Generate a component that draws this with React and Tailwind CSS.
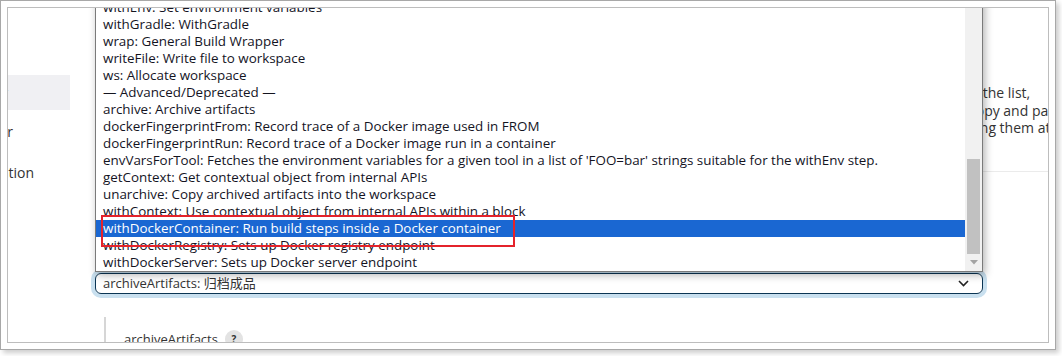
const steps = [
  'withEnv: Set environment variables',
  'withGradle: WithGradle',
  'wrap: General Build Wrapper',
  'writeFile: Write file to workspace',
  'ws: Allocate workspace',
  '— Advanced/Deprecated —',
  'archive: Archive artifacts',
  'dockerFingerprintFrom: Record trace of a Docker image used in FROM',
  'dockerFingerprintRun: Record trace of a Docker image run in a container',
  "envVarsForTool: Fetches the environment variables for a given tool in a list of 'FOO=bar' strings suitable for the withEnv step.",
  'getContext: Get contextual object from internal APIs',
  'unarchive: Copy archived artifacts into the workspace',
  'withContext: Use contextual object from internal APIs within a block',
  'withDockerContainer: Run build steps inside a Docker container',
  'withDockerRegistry: Sets up Docker registry endpoint',
  'withDockerServer: Sets up Docker server endpoint',
];

const SELECTED = 13;

function StepList() {
  return (
    <div className="absolute left-[87px] top-[-10px] z-10 flex h-[274px] w-[888px] border border-[#7a7a7a] bg-white shadow-[2px_3px_8px_rgba(0,0,0,0.3)]">
      {/* Options */}
      <ul className="flex-1 overflow-hidden">
        {steps.map((step, i) => (
          <li
            key={step}
            className={`h-[17px] whitespace-nowrap pl-[7px] text-[13.4px] leading-[17px] ${
              i === SELECTED ? 'bg-[#1a67d2] text-white' : 'text-[#14141f]'
            }`}
          >
            {step}
          </li>
        ))}
      </ul>

      {/* Scrollbar */}
      <div className="flex w-[17px] flex-col bg-[#f1f1f1]">
        <div className="flex-1" />
        <div className="mx-[2px] h-[95px] bg-[#c1c1c1]" />
        <div className="flex h-[17px] items-center justify-center">
          <svg width="8" height="5" viewBox="0 0 8 5">
            <path d="M0 0 L8 0 L4 4.5 Z" fill="#a3a3a3" />
          </svg>
        </div>
      </div>
    </div>
  );
}

function Sidebar() {
  return (
    <aside className="w-[62px] shrink-0 overflow-hidden pt-[67px] text-[14px] text-[#333]">
      <div className="flex h-[35px] items-center justify-end rounded-r-[9px] bg-[#f0f0f3] pr-[70px]">
        <span className="whitespace-nowrap">Snippet Generator</span>
      </div>
      <div className="mt-[2px] flex h-[38px] items-center justify-end pr-[57px]">
        <span className="whitespace-nowrap">Declarative Directive Generator</span>
      </div>
      <div className="mt-[3px] flex h-[38px] items-center justify-end pr-[36px]">
        <span className="whitespace-nowrap">Declarative Online Documentation</span>
      </div>
    </aside>
  );
}

export default function App() {
  return (
    <div className="h-[356px] w-[1062px] bg-white" style={{ fontFamily: '"Open Sans", "Noto Sans CJK SC", sans-serif' }}>
      <div className="h-[350px] w-[1056px] border border-[#a8a8a8] bg-white p-[6px] shadow-[3px_3px_5px_rgba(0,0,0,0.2)]">
        <div className="relative flex h-full overflow-hidden border border-[#bdbdbd] bg-white">
          <Sidebar />

          <main className="ml-[25px] flex w-[888px] shrink-0 flex-col">
            {/* Help text behind the popup */}
            <div className="mt-[76px] text-[14px] leading-[17.5px] text-[#333]">
              <p className="ml-[872px] whitespace-nowrap">in the list,</p>
              <p className="ml-[874px] whitespace-nowrap">copy and paste</p>
              <p className="ml-[866px] whitespace-nowrap">using them at</p>
            </div>
            <div className="mt-[34px] w-[1000px] border-b border-[#ebebeb]" />

            {/* Step select */}
            <div className="mt-[101px] flex h-[33px] items-center justify-between rounded-[6px] border border-[#0b3554] pl-[7px] pr-[13px] shadow-[0_0_0_4px_#c9e0ef]">
              <span className="text-[13px] text-[#333]">archiveArtifacts: 归档成品</span>
              <svg width="11" height="7" viewBox="0 0 11 7" fill="none">
                <path d="M1 1 L5.5 5.5 L10 1" stroke="#222" strokeWidth="1.6" />
              </svg>
            </div>

            {/* Step config */}
            <div className="ml-[9px] mt-[23px] flex border-l-2 border-[#d6d6d6] pl-[18px] pt-[13px]">
              <span className="text-[13px] text-[#333]">archiveArtifacts</span>
              <span className="ml-[7px] flex h-[18px] w-[18px] items-center justify-center rounded-full bg-[#e3e3e3] text-[10px] font-bold text-[#333]">
                ?
              </span>
            </div>
          </main>

          <StepList />

          {/* Annotation */}
          <div className="absolute left-[93px] top-[207px] z-20 h-[32px] w-[414px] border-2 border-[#e4232b]" />
        </div>
      </div>
    </div>
  );
}
